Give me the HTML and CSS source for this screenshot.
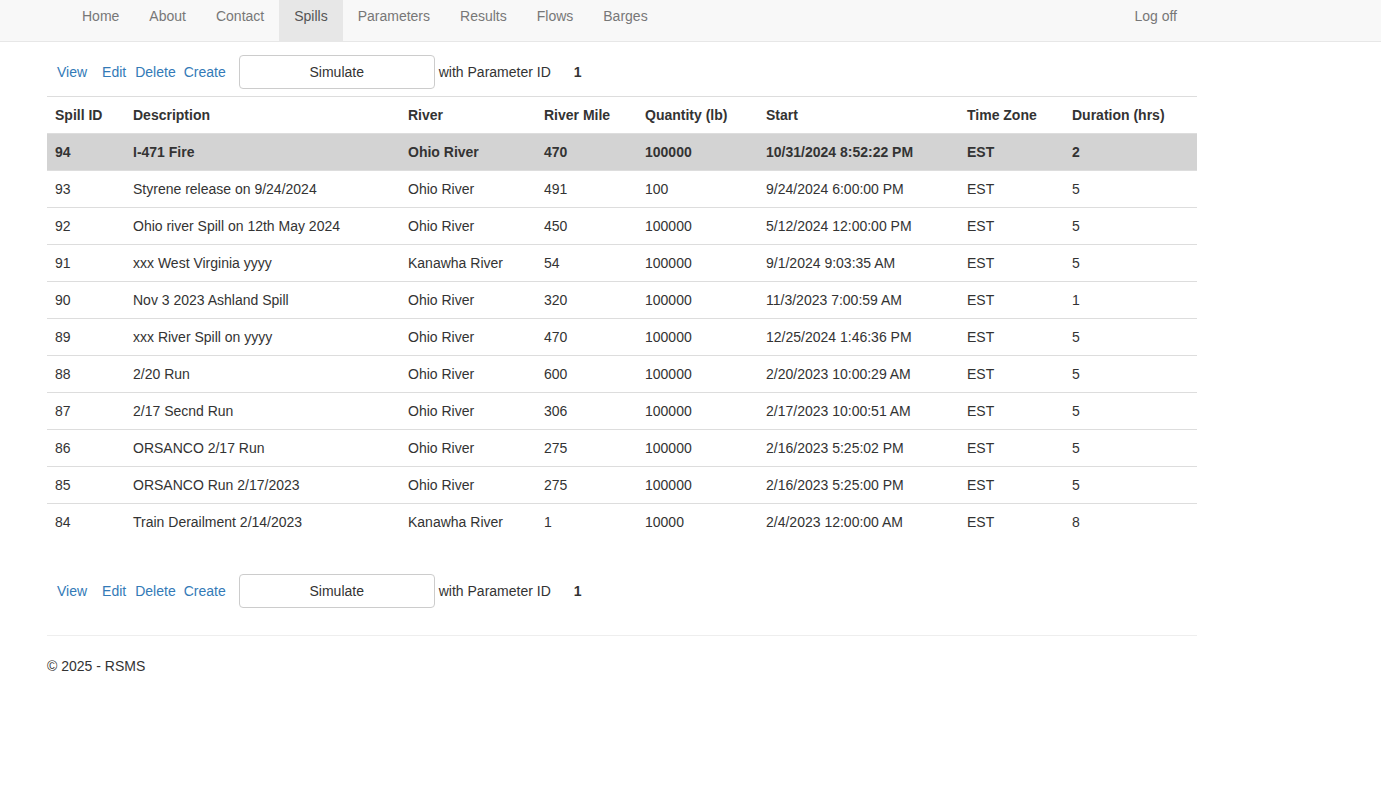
FILE: index.html
```html
<!DOCTYPE html>
<html lang="en">
<head>
  <meta charset="UTF-8">
  <meta name="viewport" content="width=device-width, initial-scale=1.0">
  <title>Spills - RSMS</title>
  <link rel="stylesheet" href="styles.css">
</head>
<body>
  <div class="navbar">
    <div class="nav-inner">
      <a class="nav-link" href="#">Home</a>
      <a class="nav-link" href="#">About</a>
      <a class="nav-link" href="#">Contact</a>
      <a class="nav-link active" href="#">Spills</a>
      <a class="nav-link" href="#">Parameters</a>
      <a class="nav-link" href="#">Results</a>
      <a class="nav-link" href="#">Flows</a>
      <a class="nav-link" href="#">Barges</a>
      <a class="nav-link nav-right" href="#">Log off</a>
    </div>
  </div>

  <div class="body-content">
    <div class="actions">
      <a class="act act-view" href="#">View</a>
      <a class="act act-edit" href="#">Edit</a>
      <a class="act act-delete" href="#">Delete</a>
      <a class="act act-create" href="#">Create</a>
      <button class="btn-sim">Simulate</button>
      <span class="param-label">with Parameter ID</span>
      <span class="param-id">1</span>
    </div>

    <table class="spills">
      <colgroup>
        <col style="width:78px">
        <col style="width:275px">
        <col style="width:136px">
        <col style="width:101px">
        <col style="width:121px">
        <col style="width:201px">
        <col style="width:105px">
        <col style="width:133px">
      </colgroup>
      <tr>
        <th>Spill ID</th>
        <th>Description</th>
        <th>River</th>
        <th>River Mile</th>
        <th>Quantity (lb)</th>
        <th>Start</th>
        <th>Time Zone</th>
        <th>Duration (hrs)</th>
      </tr>
      <tr class="selected">
        <td>94</td><td>I-471 Fire</td><td>Ohio River</td><td>470</td><td>100000</td><td>10/31/2024 8:52:22 PM</td><td>EST</td><td>2</td>
      </tr>
      <tr>
        <td>93</td><td>Styrene release on 9/24/2024</td><td>Ohio River</td><td>491</td><td>100</td><td>9/24/2024 6:00:00 PM</td><td>EST</td><td>5</td>
      </tr>
      <tr>
        <td>92</td><td>Ohio river Spill on 12th May 2024</td><td>Ohio River</td><td>450</td><td>100000</td><td>5/12/2024 12:00:00 PM</td><td>EST</td><td>5</td>
      </tr>
      <tr>
        <td>91</td><td>xxx West Virginia yyyy</td><td>Kanawha River</td><td>54</td><td>100000</td><td>9/1/2024 9:03:35 AM</td><td>EST</td><td>5</td>
      </tr>
      <tr>
        <td>90</td><td>Nov 3 2023 Ashland Spill</td><td>Ohio River</td><td>320</td><td>100000</td><td>11/3/2023 7:00:59 AM</td><td>EST</td><td>1</td>
      </tr>
      <tr>
        <td>89</td><td>xxx River Spill on yyyy</td><td>Ohio River</td><td>470</td><td>100000</td><td>12/25/2024 1:46:36 PM</td><td>EST</td><td>5</td>
      </tr>
      <tr>
        <td>88</td><td>2/20 Run</td><td>Ohio River</td><td>600</td><td>100000</td><td>2/20/2023 10:00:29 AM</td><td>EST</td><td>5</td>
      </tr>
      <tr>
        <td>87</td><td>2/17 Secnd Run</td><td>Ohio River</td><td>306</td><td>100000</td><td>2/17/2023 10:00:51 AM</td><td>EST</td><td>5</td>
      </tr>
      <tr>
        <td>86</td><td>ORSANCO 2/17 Run</td><td>Ohio River</td><td>275</td><td>100000</td><td>2/16/2023 5:25:02 PM</td><td>EST</td><td>5</td>
      </tr>
      <tr>
        <td>85</td><td>ORSANCO Run 2/17/2023</td><td>Ohio River</td><td>275</td><td>100000</td><td>2/16/2023 5:25:00 PM</td><td>EST</td><td>5</td>
      </tr>
      <tr>
        <td>84</td><td>Train Derailment 2/14/2023</td><td>Kanawha River</td><td>1</td><td>10000</td><td>2/4/2023 12:00:00 AM</td><td>EST</td><td>8</td>
      </tr>
    </table>

    <div class="actions actions-bottom">
      <a class="act act-view" href="#">View</a>
      <a class="act act-edit" href="#">Edit</a>
      <a class="act act-delete" href="#">Delete</a>
      <a class="act act-create" href="#">Create</a>
      <button class="btn-sim">Simulate</button>
      <span class="param-label">with Parameter ID</span>
      <span class="param-id">1</span>
    </div>

    <hr>
    <footer>
      <p>&copy; 2025 - RSMS</p>
    </footer>
  </div>
</body>
</html>
```

FILE: styles.css
```css
body {
  margin: 0;
  font-family: "Liberation Sans", Arial, sans-serif;
  font-size: 14px;
  line-height: 20px;
  color: #333;
  background: #fff;
}
a {
  color: #337ab7;
  text-decoration: none;
}

/* top navigation */
.navbar {
  background-color: #f8f8f8;
  border-bottom: 1px solid #e7e7e7;
}
.nav-inner {
  display: flex;
  width: 1125px;
  margin-left: 67px;
}
.nav-link {
  display: block;
  padding: 6px 15px 15px;
  color: #777;
}
.nav-link.active {
  color: #555;
  background-color: #e7e7e7;
}
.nav-right {
  margin-left: auto;
}

/* page body */
.body-content {
  width: 1150px;
  margin-left: 47px;
}
.actions {
  display: flex;
  align-items: center;
  height: 34px;
  margin-top: 13px;
  margin-bottom: 7px;
}
.actions-bottom {
  margin-top: 34px;
  margin-bottom: 27px;
}
.act {
  padding-bottom: 1px;
}
.act-view {
  margin-left: 10px;
  margin-right: 15px;
}
.act-edit {
  margin-right: 9px;
}
.act-delete {
  margin-right: 8px;
}
.act-create {
  margin-right: 13px;
}
.btn-sim {
  width: 196px;
  height: 34px;
  padding: 6px 12px;
  font-family: inherit;
  font-size: 14px;
  color: #333;
  background: #fff;
  border: 1px solid #ccc;
  border-radius: 4px;
}
.param-label {
  margin-left: 4px;
  padding-bottom: 1px;
}
.param-id {
  margin-left: 23px;
  padding-bottom: 1px;
  font-weight: bold;
}

/* spills table */
.spills {
  width: 1150px;
  table-layout: fixed;
  border-collapse: collapse;
  border-spacing: 0;
}
.spills th,
.spills td {
  padding: 8px;
  text-align: left;
  vertical-align: top;
  border-top: 1px solid #ddd;
  white-space: nowrap;
}
.spills th {
  font-weight: bold;
}
.spills tr.selected td {
  background-color: #d3d3d3;
  font-weight: bold;
}

hr {
  margin: 0;
  border: 0;
  border-top: 1px solid #eee;
}
footer p {
  margin: 20px 0;
}
```
